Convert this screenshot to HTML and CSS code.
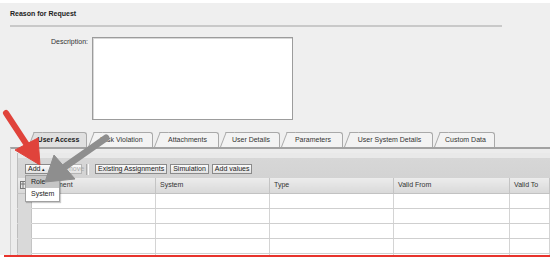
FILE: index.html
```html
<!DOCTYPE html>
<html>
<head>
<meta charset="utf-8">
<link rel="stylesheet" href="styles.css">
</head>
<body>
<div class="page">
  <div class="title">Reason for Request</div>
  <div class="rule"></div>
  <div class="desc-row">
    <div class="desc-label">Description:</div>
    <div class="desc-box"></div>
  </div>
  <div class="tabs">
    <div class="tab tab-active">User Access</div>
    <div class="tab">Risk Violation</div>
    <div class="tab">Attachments</div>
    <div class="tab">User Details</div>
    <div class="tab">Parameters</div>
    <div class="tab">User System Details</div>
    <div class="tab">Custom Data</div>
  </div>
  <div class="panel">
    <div class="toolbar">
      <div class="btn btn-add">Add <span class="caret">&#9652;</span></div>
      <div class="btn btn-disabled">Remove</div>
      <div class="sep"></div>
      <div class="btn">Existing Assignments</div>
      <div class="btn">Simulation</div>
      <div class="btn">Add values</div>
    </div>
    <table class="grid">
      <colgroup>
        <col class="c-sel"><col class="c-a"><col class="c-b"><col class="c-c"><col class="c-d"><col>
      </colgroup>
      <thead>
        <tr>
          <th class="sel"><svg class="sel-icon" viewBox="0 0 8 8" width="8" height="8"><rect x="0.5" y="0.5" width="7" height="7" fill="#e8e8e8" stroke="#777"/><path d="M0.5 3h7M3 0.5v7" stroke="#777" stroke-width="1"/></svg></th>
          <th>Assignment</th>
          <th>System</th>
          <th>Type</th>
          <th>Valid From</th>
          <th>Valid To</th>
        </tr>
      </thead>
      <tbody>
        <tr><td class="sel"></td><td></td><td></td><td></td><td></td><td></td></tr>
        <tr><td class="sel"></td><td></td><td></td><td></td><td></td><td></td></tr>
        <tr><td class="sel"></td><td></td><td></td><td></td><td></td><td></td></tr>
        <tr><td class="sel"></td><td></td><td></td><td></td><td></td><td></td></tr>
        <tr><td class="sel"></td><td></td><td></td><td></td><td></td><td></td></tr>
      </tbody>
    </table>
  </div>
</div>
<div class="redline"></div>

<div class="menu">
  <div class="menu-item menu-item-hover">Role</div>
  <div class="menu-item">System</div>
</div>

<svg class="arrows" viewBox="0 0 550 257" width="550" height="257">
  <line x1="6" y1="113" x2="27" y2="145" stroke="#e0433b" stroke-width="6" stroke-linecap="round"/>
  <polygon points="40,165 38,138 15,150" fill="#e0433b" stroke="#e0433b" stroke-width="1" stroke-linejoin="round"/>
  <line x1="106" y1="138" x2="66" y2="166" stroke="#8e8e8e" stroke-width="7" stroke-linecap="round"/>
  <polygon points="45,182 54,155 75,179" fill="#8e8e8e" stroke="#8e8e8e" stroke-width="1" stroke-linejoin="round"/>
</svg>
</body>
</html>
```
FILE: styles.css
```css
html, body {
  margin: 0;
  padding: 0;
  background: #ffffff;
}
body {
  position: relative;
  width: 550px;
  height: 257px;
  overflow: hidden;
  font-family: "Liberation Sans", Arial, sans-serif;
  font-size: 7px;
  color: #333;
}
.page {
  margin-top: 3px;
  height: 252px;
  background: #efefef;
  overflow: hidden;
  padding-top: 7px;
  box-sizing: border-box;
}
.title {
  padding-left: 10px;
  font-weight: bold;
  line-height: 8px;
  color: #222;
}
.rule {
  margin: 7px 0 0 10px;
  width: 492px;
  height: 2px;
  background: #c9c9c9;
}
.desc-row {
  display: flex;
  gap: 4px;
  margin-top: 10px;
}
.desc-label {
  width: 88px;
  text-align: right;
  line-height: 8px;
  margin-top: 1px;
  color: #333;
}
.desc-box {
  width: 201px;
  height: 83px;
  box-sizing: border-box;
  background: #fff;
  border: 1px solid #9c9c9c;
  box-shadow: inset 1px 1px 0 #d8d8d8;
}
.tabs {
  display: grid;
  grid-template-columns: 53px 59px 59px 54px 56px 83px 55px;
  column-gap: 7px;
  margin-top: 12px;
  padding-left: 34px;
  height: 15px;
}
.tab {
  position: relative;
  z-index: 0;
  height: 15px;
  box-sizing: border-box;
  background: #f3f3f3;
  border-top: 1px solid #a9a9a9;
  border-right: 1px solid #a9a9a9;
  border-top-right-radius: 3px;
  line-height: 14px;
  text-align: center;
  padding-right: 3px;
  white-space: nowrap;
  color: #333;
}
.tab::before {
  content: "";
  position: absolute;
  left: -6px;
  top: -1px;
  bottom: 0;
  width: 8px;
  background: inherit;
  border-top: 1px solid #a9a9a9;
  border-left: 1px solid #a9a9a9;
  transform: skewX(-21deg);
  transform-origin: bottom left;
  z-index: -1;
}
.tab-active {
  background: #e0e0e0;
  font-weight: bold;
  color: #222;
}
.panel {
  margin-left: 10px;
  border-top: 2px solid #a2a2a2;
  border-left: 1px solid #cdcdcd;
  background: #ececec;
  padding: 4px 0 0 6px;
}
.toolbar {
  display: flex;
  align-items: center;
  gap: 3px;
  height: 25px;
  box-sizing: border-box;
  padding: 11px 0 4px 7px;
  border-left: 1px solid #bdbdbd;
  background: linear-gradient(#e9e9e9 0, #e9e9e9 5px, #d7d7d7 5px, #d3d3d3 100%);
}
.btn {
  height: 10px;
  box-sizing: border-box;
  border: 1px solid #8a8a8a;
  background: linear-gradient(#fbfbfb, #e2e2e2);
  padding: 0 2px;
  line-height: 8px;
  white-space: nowrap;
  color: #222;
}
.btn-add {
  width: 27px;
}
.caret {
  font-size: 5px;
}
.btn-disabled {
  color: #aaa;
  border-color: #b5b5b5;
  width: 27px;
}
.sep {
  width: 1px;
  height: 11px;
  border-left: 1px solid #aaa;
  border-right: 1px solid #fafafa;
  margin: 0 3px 0 1px;
}
.grid {
  border-collapse: collapse;
  table-layout: fixed;
  width: 533px;
  border-left: 1px solid #bdbdbd;
}
.c-sel { width: 14px; }
.c-a { width: 124px; }
.c-b { width: 114px; }
.c-c { width: 124px; }
.c-d { width: 116px; }
.grid th {
  height: 15px;
  padding: 0 0 0 4px;
  box-sizing: border-box;
  text-align: left;
  font-weight: normal;
  color: #333;
  background: linear-gradient(#ececec, #d9d9d9);
  border-bottom: 1px solid #c2c2c2;
  border-right: 1px solid #c4c4c4;
  line-height: 14px;
  white-space: nowrap;
}
.grid td {
  height: 15px;
  padding: 0;
  box-sizing: border-box;
  background: #fff;
  border-bottom: 1px solid #cfcfcf;
  border-right: 1px solid #d4d4d4;
}
.grid th.sel {
  padding: 0 0 0 2px;
}
.grid td.sel {
  background: #d9d9d9;
  border-bottom: 1px solid #d9d9d9;
  border-right: 1px solid #c4c4c4;
}
.sel-icon {
  display: block;
}
.redline {
  height: 2px;
  margin-left: 4px;
  background: #e8332c;
}
.menu {
  position: absolute;
  left: 25px;
  top: 175px;
  width: 35px;
  box-sizing: border-box;
  background: #fff;
  border: 1px solid #a0a0a0;
  box-shadow: 1px 1px 1px rgba(0,0,0,0.2);
  padding-bottom: 1px;
}
.menu-item {
  height: 12px;
  line-height: 12px;
  padding-left: 5px;
  color: #222;
}
.menu-item-hover {
  background: #c6c6c6;
}
.arrows {
  position: absolute;
  left: 0;
  top: 0;
  pointer-events: none;
}
```
